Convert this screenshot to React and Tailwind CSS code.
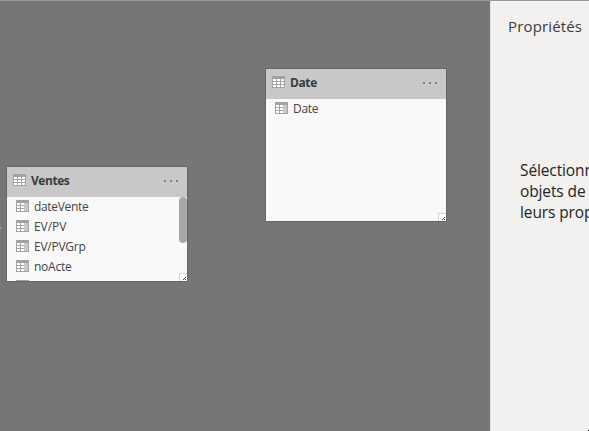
function TableIcon() {
  return (
    <svg width="13" height="12" viewBox="0 0 13 12" shapeRendering="crispEdges" className="block shrink-0">
      <rect width="13" height="12" fill="#a3a3a3" />
      {[3, 6, 9].map((y) => [1, 5, 9].map((x) => (
        <rect key={`${x}-${y}`} x={x} y={y} width="3" height="2" fill="#fff" />
      )))}
    </svg>
  );
}

function ColumnIcon() {
  return (
    <svg width="13" height="12" viewBox="0 0 13 12" shapeRendering="crispEdges" className="block shrink-0">
      <rect width="13" height="12" fill="#a3a3a3" />
      {[3, 6, 9].map((y) => [1, 5].map((x) => (
        <rect key={`${x}-${y}`} x={x} y={y} width="3" height="2" fill="#fff" />
      )))}
      <rect x="8" y="3" width="4" height="8" fill="#c8c8c8" />
    </svg>
  );
}

function MoreDots() {
  return (
    <div className="mr-[9px] mb-[2px] ml-auto flex gap-1">
      <span className="size-[2px] bg-[#808080]" />
      <span className="size-[2px] bg-[#808080]" />
      <span className="size-[2px] bg-[#808080]" />
    </div>
  );
}

function ResizeHandle() {
  return (
    <svg width="8" height="8" viewBox="0 0 8 8" shapeRendering="crispEdges" className="absolute right-0 bottom-0">
      <rect width="8" height="8" fill="#d4d4d4" />
      <rect x="1" y="1" width="7" height="7" fill="#fff" />
      <path d="M6 4h1v1h-1zM5 5h1v1h-1zM4 6h1v1h-1zM6 6h1v1h-1z" fill="#444" />
    </svg>
  );
}

function TableCard({ title, titleClass, fields, className, scroll }) {
  return (
    <section className={`absolute flex w-[182px] flex-col border border-[#666] bg-[#f9f9f9] ${className}`}>
      <header className="flex h-[30px] shrink-0 items-center bg-[#c8c8c8] pl-1.5">
        <div className="pb-1"><TableIcon /></div>
        <h2 className={`mb-[2px] ml-[5px] text-[12px] leading-4 font-bold text-[#3a3a3a] ${titleClass}`}>{title}</h2>
        <MoreDots />
      </header>
      <ul className="relative min-h-0 flex-1 overflow-hidden">
        {fields.map((f) => (
          <li key={f.name} className="flex h-5 items-start pt-[3px] pl-[9px]">
            <ColumnIcon />
            <span className={`-mt-px ml-[5px] text-[12px] leading-4 text-[#444] ${f.fit}`}>{f.name}</span>
          </li>
        ))}
        {scroll && <div className="absolute top-0 right-0 h-[46px] w-2 rounded-full bg-[#a8a8a8]" />}
        <ResizeHandle />
      </ul>
    </section>
  );
}

const ventes = [
  { name: "dateVente", fit: "tracking-[-0.33px]" },
  { name: "EV/PV", fit: "tracking-[-0.05px]" },
  { name: "EV/PVGrp", fit: "tracking-[-0.25px]" },
  { name: "noActe", fit: "tracking-[-0.25px]" },
  { name: "", fit: "" },
];

const dates = [{ name: "Date", fit: "tracking-[-0.3px]" }];

export default function App() {
  return (
    <div className="flex h-[431px] w-[589px] overflow-hidden border-t border-[#999] bg-[#767676] font-['Open_Sans','Noto_Sans',sans-serif]">
      <main className="relative w-[490px] shrink-0 overflow-hidden">
        <span className="absolute top-[219px] left-[-5px] text-[11px] leading-4 text-[#d8c0a8]">e</span>
        <TableCard title="Ventes" titleClass="tracking-[-0.45px]" fields={ventes} scroll className="top-[165px] left-[6px] h-[116px]" />
        <TableCard title="Date" titleClass="tracking-[-0.4px]" fields={dates} className="top-[67px] left-[265px] h-[154px]" />
      </main>
      <aside className="relative w-[99px] shrink-0 overflow-hidden border-l border-[#e4e2e0] bg-[#f2f1ef]">
        <h1 className="mt-[15px] ml-[17px] text-[15px] leading-5 tracking-[0.15px] whitespace-nowrap text-[#3c3c3c]">Propriétés</h1>
        <p className="mt-[124px] ml-[29px] text-[15.5px] leading-[21px] tracking-[-0.12px] whitespace-nowrap text-[#252423]">
          Sélectionnez les
          <br />
          objets de modèle
          <br />
          leurs propriétés
        </p>
        <span className="absolute right-0 bottom-0 size-px bg-[#1a1a3a]" />
      </aside>
    </div>
  );
}
